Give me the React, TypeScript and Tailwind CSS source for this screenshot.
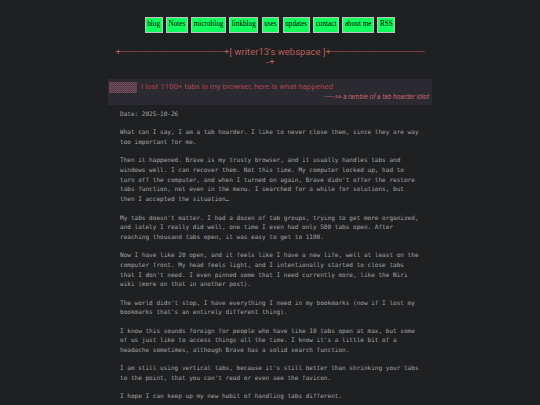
import React from "react";

const NAV = ["blog", "Notes", "microblog", "linkblog", "uses", "updates", "contact", "about me", "RSS"];

const PARAGRAPHS = [
  "Date: 2025-10-26",
  "What can I say, I am a tab hoarder. I like to never close them, since they are way too important for me.",
  "Then it happened. Brave is my trusty browser, and it usually handles tabs and windows well. I can recover them. Not this time. My computer locked up, had to turn off the computer, and when I turned on again, Brave didn't offer the restore tabs function, not even in the menu. I searched for a while for solutions, but then I accepted the situation…",
  "My tabs doesn't matter. I had a dozen of tab groups, trying to get more organized, and lately I really did well, one time I even had only 500 tabs open. After reaching thousand tabs open, it was easy to get to 1100.",
  "Now I have like 20 open, and it feels like I have a new life, well at least on the computer front. My head feels light, and I intentionally started to close tabs that I don't need. I even pinned some that I need currently more, like the Niri wiki (more on that in another post).",
  "The world didn't stop, I have everything I need in my bookmarks (now if I lost my bookmarks that's an entirely different thing).",
  "I know this sounds foreign for people who have like 10 tabs open at max, but some of us just like to access things all the time. I know it's a little bit of a headache sometimes, although Brave has a solid search function.",
  "I am still using vertical tabs, because it's still better than shrinking your tabs to the point, that you can't read or even see the favicon.",
  "I hope I can keep up my new habit of handling tabs different.",
];

export default function App() {
  return (
    <div className="min-h-[405px] bg-[#1f2022] overflow-hidden">
      {/* Nav */}
      <nav className="flex justify-center gap-[3.5px] pt-[17px]">
        {NAV.map((item) => (
          <a
            key={item}
            className="h-[16px] px-[1.5px] flex items-center bg-[#10ff5c] border border-[#b8c4bc] text-black text-[7.2px] leading-none"
            style={{ fontFamily: '"Liberation Serif", "Times New Roman", serif' }}
          >
            {item}
          </a>
        ))}
      </nav>

      {/* Banner */}
      <div
        className="mt-[14px] flex flex-col items-center text-[#b85c5c] text-[9.5px] leading-[10px]"
        style={{ fontFamily: 'Roboto, "Liberation Sans", sans-serif' }}
      >
        <div className="whitespace-nowrap flex items-center">
          <span>+</span>
          <span className="text-[8px] tracking-[-0.3px]">{"-".repeat(54)}</span>
          <span>+[ writer13's webspace ]+</span>
          <span className="text-[8px] tracking-[-0.3px]">{"-".repeat(49)}</span>
        </div>
        <div className="whitespace-nowrap">
          <span className="text-[8px] tracking-[-0.3px]">--</span>+
        </div>
      </div>

      {/* Post */}
      <main className="w-[324px] mx-auto mt-[11px]">
        <header className="bg-[#2c2a31] px-[1px] pt-[2px] pb-[3px]">
          <div className="flex items-start gap-[4px]">
            <svg width="28" height="11" className="shrink-0 mt-[1px]">
              <defs>
                <pattern id="dith" width="2" height="2" patternUnits="userSpaceOnUse">
                  <rect width="2" height="2" fill="#4f3a4a" />
                  <rect width="1" height="1" fill="#7c4f5f" />
                  <rect x="1" y="1" width="1" height="1" fill="#6c4656" />
                </pattern>
              </defs>
              <rect width="28" height="11" fill="url(#dith)" />
            </svg>
            <h1
              className="text-[#a8454d] text-[7.9px] leading-[12px]"
              style={{ fontFamily: 'Roboto, "Liberation Sans", sans-serif' }}
            >
              I lost 1100+ tabs in my browser, here is what happened
            </h1>
          </div>
          <p
            className="text-right pr-[2px] text-[#c4626b] text-[6.6px] leading-[9px] italic"
            style={{ fontFamily: 'Roboto, "Liberation Sans", sans-serif' }}
          >
            ------&gt;&gt; a ramble of a tab hoarder idiot
          </p>
        </header>

        <article
          className="pl-[12px] pt-[4px] text-[6.05px] leading-[9.65px] text-[#a3a3a3]"
          style={{ fontFamily: '"DejaVu Sans Mono", "Liberation Mono", monospace' }}
        >
          <div className="w-[82.5ch]">
            {PARAGRAPHS.map((p, i) => (
              <p key={i} className="mb-[8.75px]">
                {p}
              </p>
            ))}
          </div>
        </article>
      </main>
    </div>
  );
}
